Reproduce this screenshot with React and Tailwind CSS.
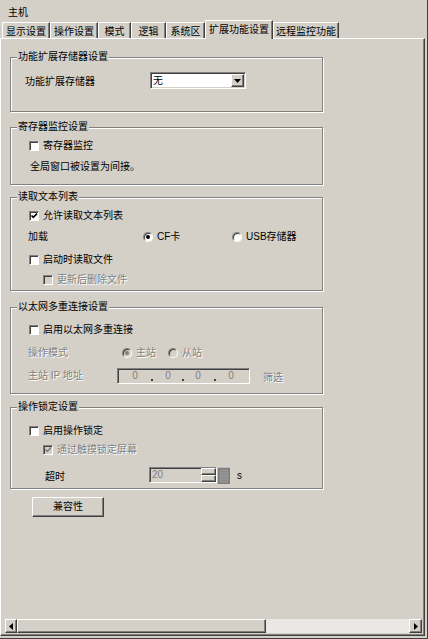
import React from 'react';

// classic win9x look, all greys
const raised =
  'border border-t-white border-l-white border-b-[#404040] border-r-[#404040] shadow-[inset_-1px_-1px_0_#808080]';
const sunken =
  'border border-t-[#808080] border-l-[#808080] border-b-white border-r-white shadow-[inset_1px_1px_0_#404040,inset_-1px_-1px_0_#d4d0c8]';
const dim = 'text-[#808080] [text-shadow:1px_1px_0_#fff]';

const CheckBox = ({ checked, disabled }) => (
  <span
    className={`relative inline-block w-[10px] h-[10px] shrink-0 border border-t-[#808080] border-l-[#808080] border-b-white border-r-white shadow-[inset_1px_1px_0_#404040] ${
      disabled ? 'bg-[#d4d0c8]' : 'bg-white'
    }`}
  >
    {checked && (
      <svg viewBox="0 0 8 8" className="absolute left-0 top-0 w-[8px] h-[8px]">
        <path d="M1.5 3.5 L3.3 5.4 L7 1.6" fill="none" stroke={disabled ? '#808080' : '#000'} strokeWidth="1.6" />
      </svg>
    )}
  </span>
);

const Radio = ({ checked, disabled }) => (
  <span
    className={`inline-flex items-center justify-center w-[10px] h-[10px] shrink-0 rounded-full border border-t-[#808080] border-l-[#808080] border-b-white border-r-white shadow-[inset_1px_1px_0_#404040] ${
      disabled ? 'bg-[#d4d0c8]' : 'bg-white'
    }`}
  >
    {checked && <span className={`w-[4px] h-[4px] rounded-full ${disabled ? 'bg-[#808080]' : 'bg-black'}`} />}
  </span>
);

const Group = ({ title, className, children }) => (
  <div
    className={`relative ml-[9px] w-[313px] shrink-0 border border-[#808080] shadow-[inset_1px_1px_0_#fff,1px_1px_0_#fff] ${className}`}
  >
    <span className="absolute left-[6px] -top-[7px] px-[1px] bg-[#d4d0c8] leading-[12px] whitespace-nowrap">{title}</span>
    {children}
  </div>
);

const Row = ({ className = '', children }) => (
  <div className={`flex items-center h-[12px] gap-[4px] whitespace-nowrap ${className}`}>{children}</div>
);

const tabs = [
  { label: '显示设置', w: 'w-[48px]' },
  { label: '操作设置', w: 'w-[48px]' },
  { label: '模式', w: 'w-[33px]' },
  { label: '逻辑', w: 'w-[35px]' },
  { label: '系统区', w: 'w-[39px]' },
  { label: '扩展功能设置', w: 'w-[68px]', active: true },
  { label: '远程监控功能', w: 'w-[66px]' },
];

const Arrow = ({ dir }) => (
  <svg viewBox="0 0 4 7" className="w-[4px] h-[7px]">
    <path d={dir === 'left' ? 'M4 0 L0 3.5 L4 7 Z' : 'M0 0 L4 3.5 L0 7 Z'} fill="#000" />
  </svg>
);

export default function App() {
  return (
    <div className="w-[428px] h-[639px] bg-[#d4d0c8] border-r border-b border-[#404040] flex flex-col text-[10px] leading-[12px] text-black font-['Liberation_Sans','Noto_Sans_CJK_SC',sans-serif] overflow-hidden">
      <div className="h-[20px] shrink-0 pl-[8px] pt-[7px]">主机</div>

      {/* tab strip */}
      <div className="flex items-end h-[18px] shrink-0 pl-[2px]">
        {tabs.map((t) =>
          t.active ? (
            <div
              key={t.label}
              className={`${t.w} relative z-10 h-[19px] -mb-[1px] flex items-center justify-center whitespace-nowrap bg-[#d4d0c8] border-t border-l border-r border-t-white border-l-white border-r-[#404040] shadow-[inset_-1px_0_0_#808080]`}
            >
              {t.label}
            </div>
          ) : (
            <div
              key={t.label}
              className={`${t.w} h-[16px] pt-[2px] flex items-center justify-center whitespace-nowrap border-t border-l border-r border-t-white border-l-white border-r-[#404040] shadow-[inset_-1px_0_0_#808080]`}
            >
              {t.label}
            </div>
          )
        )}
      </div>

      {/* tab page */}
      <div className="w-[425px] h-[598px] shrink-0 flex flex-col border-t border-l border-t-white border-l-white border-r border-b border-r-[#404040] border-b-[#404040] shadow-[inset_-1px_-1px_0_#808080]">
        <Group title="功能扩展存储器设置" className="mt-[18px] h-[55px]">
          <div className="flex items-center pt-[14px] pl-[14px]">
            <span className="w-[125px] pt-[3px]">功能扩展存储器</span>
            <div className={`flex w-[96px] h-[17px] bg-white p-[1px] ${sunken}`}>
              <span className="flex-1 pl-[1px] leading-[13px]">无</span>
              <span className={`w-[13px] h-[13px] bg-[#d4d0c8] flex items-center justify-center ${raised}`}>
                <svg viewBox="0 0 7 4" className="w-[7px] h-[4px]">
                  <path d="M0 0 L7 0 L3.5 4 Z" fill="#000" />
                </svg>
              </span>
            </div>
          </div>
        </Group>

        <Group title="寄存器监控设置" className="mt-[15px] h-[58px]">
          <div className="flex flex-col pt-[12px] pl-[18px]">
            <Row>
              <CheckBox />
              <span>寄存器监控</span>
            </Row>
            <Row className="mt-[9px] ml-[1px]">全局窗口被设置为间接。</Row>
          </div>
        </Group>

        <Group title="读取文本列表" className="mt-[12px] h-[94px]">
          <div className="flex flex-col pt-[12px] pl-[18px]">
            <Row>
              <CheckBox checked />
              <span>允许读取文本列表</span>
            </Row>
            <Row className="mt-[9px] gap-0 -ml-[1px]">
              <span className="w-[111px]">加载</span>
              <span className="w-[85px] flex items-center gap-[4px]">
                <Radio checked />
                <span>CF卡</span>
              </span>
              <span className="flex items-center gap-[4px]">
                <Radio />
                <span>USB存储器</span>
              </span>
            </Row>
            <Row className="mt-[11px]">
              <CheckBox />
              <span>启动时读取文件</span>
            </Row>
            <Row className="mt-[8px] ml-[14px]">
              <CheckBox disabled />
              <span className={dim}>更新后删除文件</span>
            </Row>
          </div>
        </Group>

        <Group title="以太网多重连接设置" className="mt-[16px] h-[87px]">
          <div className="flex flex-col pt-[16px] pl-[18px]">
            <Row>
              <CheckBox />
              <span>启用以太网多重连接</span>
            </Row>
            <Row className="mt-[11px] gap-0 -ml-[1px]">
              <span className={`w-[90px] ${dim}`}>操作模式</span>
              <span className="w-[42px] flex items-center gap-[4px]">
                <Radio checked disabled />
                <span className={dim}>主站</span>
              </span>
              <span className="flex items-center gap-[4px]">
                <Radio disabled />
                <span className={dim}>从站</span>
              </span>
            </Row>
            <div className="flex items-center h-[16px] mt-[9px] -ml-[1px] whitespace-nowrap">
              <span className={`w-[89px] ${dim}`}>主站 IP 地址</span>
              <div className={`flex items-center w-[133px] h-[16px] bg-[#d4d0c8] text-[#808080] ${sunken}`}>
                <span className="ml-[14px] w-[6px] text-center">0</span>
                <span className="ml-[13px] w-[2px] h-[2px] bg-[#404040] self-end mb-[2px]" />
                <span className="ml-[12px] w-[6px] text-center">0</span>
                <span className="ml-[11px] w-[2px] h-[2px] bg-[#404040] self-end mb-[2px]" />
                <span className="ml-[11px] w-[6px] text-center">0</span>
                <span className="ml-[13px] w-[2px] h-[2px] bg-[#404040] self-end mb-[2px]" />
                <span className="ml-[12px] w-[6px] text-center">0</span>
              </div>
              <span className={`ml-[13px] pt-[4px] ${dim}`}>筛选</span>
            </div>
          </div>
        </Group>

        <Group title="操作锁定设置" className="mt-[13px] h-[82px]">
          <div className="flex flex-col pt-[17px] pl-[18px]">
            <Row>
              <CheckBox />
              <span>启用操作锁定</span>
            </Row>
            <Row className="mt-[7px] ml-[14px]">
              <CheckBox checked disabled />
              <span className={dim}>通过触摸锁定屏幕</span>
            </Row>
            <div className="flex items-center h-[16px] mt-[11px] whitespace-nowrap">
              <span className="ml-[16px] w-[104px] pt-[3px]">超时</span>
              <div className={`flex w-[68px] h-[16px] bg-[#d4d0c8] ${sunken}`}>
                <span className="flex-1 pl-[2px] leading-[14px] text-[#808080]">20</span>
                <div className="w-[15px] flex flex-col">
                  <span className={`h-[7px] bg-[#d4d0c8] ${raised}`} />
                  <span className={`h-[7px] bg-[#d4d0c8] ${raised}`} />
                </div>
              </div>
              <svg viewBox="0 0 13 17" className="w-[13px] h-[17px]">
                <rect x="0" y="0" width="13" height="17" fill="#7d7d7d" />
                <path d="M0 0 H13 M0 0 V17" stroke="#fff" strokeWidth="1" />
                <path d="M3 3 H11 M3 6 H11 M3 9 H11 M3 12 H11 M3 15 H11 M3 3 V15 M5 3 V15 M7 3 V15 M9 3 V15 M11 3 V15" stroke="#a8a8a8" strokeWidth="0.7" />
              </svg>
              <span className="ml-[7px] pt-[2px]">s</span>
            </div>
          </div>
        </Group>

        <button className={`mt-[8px] ml-[31px] w-[72px] h-[20px] shrink-0 flex items-center justify-center bg-[#d4d0c8] ${raised}`}>
          兼容性
        </button>

        {/* horizontal scrollbar */}
        <div className="mt-auto mb-[2px] ml-[4px] w-[417px] h-[14px] flex shrink-0">
          <span className={`w-[12px] h-[14px] flex items-center justify-center bg-[#d4d0c8] ${raised}`}>
            <Arrow dir="left" />
          </span>
          <span className={`w-[249px] h-[14px] bg-[#d4d0c8] ${raised}`} />
          <span className="flex-1 h-[14px] bg-[#eae8e4]" />
          <span className={`w-[13px] h-[14px] flex items-center justify-center bg-[#d4d0c8] ${raised}`}>
            <Arrow dir="right" />
          </span>
        </div>
      </div>
    </div>
  );
}
